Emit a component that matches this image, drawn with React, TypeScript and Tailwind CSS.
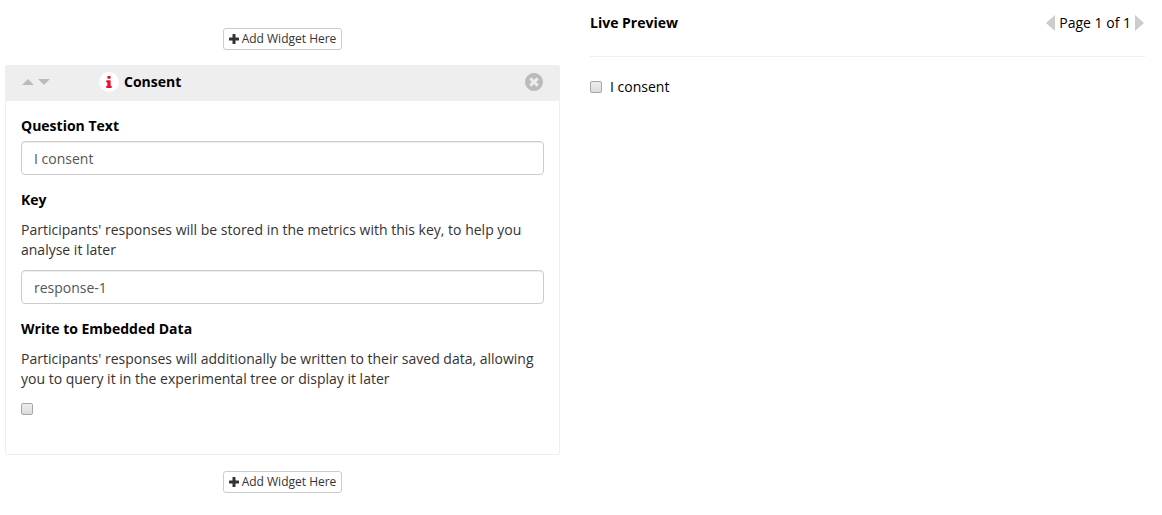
import React, { useState } from 'react';

// Props for the button that inserts a new widget
interface AddWidgetButtonProps {
  onClick?: () => void;
}

const PlusIcon = () => (
  <svg viewBox="0 0 10 10" className="h-[10px] w-[10px]" fill="currentColor" aria-hidden="true">
    <path d="M4 0h2q.5 0 .5.5v3h3q.5 0 .5.5v2q0 .5-.5.5h-3v3q0 .5-.5.5H4q-.5 0-.5-.5v-3h-3q-.5 0-.5-.5V4q0-.5.5-.5h3v-3q0-.5.5-.5z" />
  </svg>
);

const InfoIcon = () => (
  <svg viewBox="0 128 640 1408" className="h-[12px] w-[6px]" fill="currentColor" aria-hidden="true">
    <path d="M640 1344v128q0 26-19 45t-45 19h-512q-26 0-45-19t-19-45v-128q0-26 19-45t45-19h64v-384h-64q-26 0-45-19t-19-45v-128q0-26 19-45t45-19h384q26 0 45 19t19 45v576h64q26 0 45 19t19 45zM512 192v192q0 26-19 45t-45 19h-256q-26 0-45-19t-19-45v-192q0-26 19-45t45-19h256q26 0 45 19t19 45z" />
  </svg>
);

const CloseIcon = () => (
  <svg viewBox="0 128 1536 1536" className="h-[18px] w-[18px]" fill="currentColor" aria-hidden="true">
    <path d="M1149 1122q0-26-19-45l-181-181 181-181q19-19 19-45 0-27-19-46l-90-90q-19-19-46-19-26 0-45 19l-181 181-181-181q-19-19-45-19-27 0-46 19l-90 90q-19 19-19 46 0 26 19 45l181 181-181 181q-19 19-19 45 0 27 19 46l90 90q19 19 46 19 26 0 45-19l181-181 181 181q19 19 45 19 27 0 46-19l90-90q19-19 19-46zM1536 896q0 209-103 385.5t-279.5 279.5-385.5 103-385.5-103-279.5-279.5-103-385.5 103-385.5 279.5-279.5 385.5-103 385.5 103 279.5 279.5 103 385.5z" />
  </svg>
);

const AddWidgetButton: React.FC<AddWidgetButtonProps> = ({ onClick }) => (
  <button
    type="button"
    onClick={onClick}
    className="flex h-[22px] items-center gap-[3px] rounded-[3px] border border-[#ccc] bg-white px-[5px] text-[12px] leading-[18px] text-[#333]"
  >
    <PlusIcon />
    Add Widget Here
  </button>
);

// Shared look of the small grey tick boxes
const checkboxClass =
  'block h-3 w-3 shrink-0 appearance-none rounded-[2px] border border-[#a6a6a6] bg-linear-to-b from-[#eee] to-[#dcdcdc] checked:from-[#777] checked:to-[#555]';

const inputClass =
  'block h-[34px] w-full rounded-[4px] border border-[#ccc] bg-white px-3 text-[14px] leading-5 text-[#555] shadow-[inset_0_1px_1px_rgba(0,0,0,0.075)] outline-none focus:border-[#66afe9]';

const App: React.FC = () => {
  const [question, setQuestion] = useState('I consent');
  const [responseKey, setResponseKey] = useState('response-1');

  return (
    <div className="grid grid-cols-2 gap-[30px] pl-[5px] pr-[17px] font-['Open_Sans',sans-serif] text-[14px] leading-5 text-black">
      {/* Widget editor */}
      <main className="flex flex-col items-center gap-4 pt-7">
        <AddWidgetButton />

        <section className="-mt-px w-full rounded-[2px] border border-[#eee]">
          <header className="flex h-[35px] items-center bg-[#eee] px-4 pb-[3px]">
            {/* Move up and down */}
            <div className="flex w-[77px] gap-1 text-[#bbb]">
              <button type="button" aria-label="Move up">
                <svg viewBox="0 0 12 6" className="h-[6px] w-3" fill="currentColor">
                  <path d="M6 0l6 6H0z" />
                </svg>
              </button>
              <button type="button" aria-label="Move down">
                <svg viewBox="0 0 12 6" className="h-[6px] w-3" fill="currentColor">
                  <path d="M0 0h12L6 6z" />
                </svg>
              </button>
            </div>
            <span className="mr-[5px] flex h-5 w-5 items-center justify-center rounded-full bg-white text-[#e8112d]">
              <InfoIcon />
            </span>
            <h2 className="grow font-bold">Consent</h2>
            <button type="button" aria-label="Remove widget" className="text-[#bbb]">
              <CloseIcon />
            </button>
          </header>

          <form className="flex flex-col gap-[15px] px-[15px] pb-[39px] pt-[15px]">
            <div>
              <label htmlFor="question" className="mb-[5px] block font-bold">
                Question Text
              </label>
              <input
                id="question"
                type="text"
                value={question}
                onChange={(e) => setQuestion(e.target.value)}
                className={inputClass}
              />
            </div>

            <div>
              <label htmlFor="key" className="mb-[10px] block font-bold">
                Key
              </label>
              <p className="mb-[10px] text-[#333]">
                Participants' responses will be stored in the metrics with this key, to help you analyse it later
              </p>
              <input
                id="key"
                type="text"
                value={responseKey}
                onChange={(e) => setResponseKey(e.target.value)}
                className={inputClass}
              />
            </div>

            <div>
              <label htmlFor="embedded" className="mb-[10px] block font-bold">
                Write to Embedded Data
              </label>
              <p className="mb-[14px] text-[#333]">
                Participants' responses will additionally be written to their saved data, allowing you to query it in
                the experimental tree or display it later
              </p>
              <input id="embedded" type="checkbox" className={checkboxClass} />
            </div>
          </form>
        </section>

        <AddWidgetButton />
      </main>

      {/* Live preview of the page being edited */}
      <aside className="pt-[13px]">
        <header className="flex justify-between border-b border-[#eee] pb-[23px]">
          <h2 className="font-bold">Live Preview</h2>
          <nav className="flex items-center gap-1 pr-px">
            <button type="button" aria-label="Previous page" className="text-[#ccc]">
              <svg viewBox="0 0 9 16" className="h-4 w-[9px]" fill="currentColor">
                <path d="M9 0v16L0 8z" />
              </svg>
            </button>
            <span>Page 1 of 1</span>
            <button type="button" aria-label="Next page" className="text-[#ccc]">
              <svg viewBox="0 0 9 16" className="h-4 w-[9px]" fill="currentColor">
                <path d="M0 0l9 8-9 8z" />
              </svg>
            </button>
          </nav>
        </header>
        <label className="mt-5 flex items-center gap-2">
          <input type="checkbox" className={checkboxClass} />
          {question}
        </label>
      </aside>
    </div>
  );
};

export default App;
